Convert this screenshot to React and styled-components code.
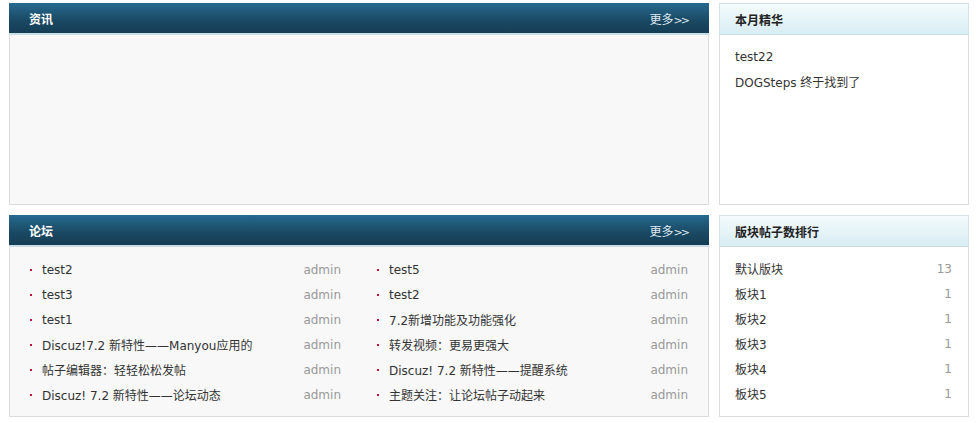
import styled, { createGlobalStyle } from 'styled-components';

const Global = createGlobalStyle`
  body {
    margin: 0;
    background: #fff;
    font-family: "DejaVu Sans", "Noto Sans CJK SC", sans-serif;
    font-size: 12px;
    color: #333;
  }
`;

const Page = styled.div`
  display: grid;
  grid-template-columns: 700px 250px;
  grid-template-rows: 202px 202px;
  column-gap: 10px;
  row-gap: 10px;
  padding: 3px 8px 0 9px;
`;

const Panel = styled.div`
  border: 1px solid #dcdcdc;
  background: ${p => (p.light ? '#fff' : '#f8f8f8')};
  display: flex;
  flex-direction: column;
  box-sizing: border-box;
`;

const Header = styled.div`
  margin: -1px -1px 0;
  display: flex;
  align-items: center;
  justify-content: space-between;
  padding: 0 20px 0 20px;
  box-sizing: border-box;
  ${p =>
    p.light
      ? `
    background: linear-gradient(#f4fbfd, #d8edf4);
    border: 1px solid #d4e2e8;
    border-bottom: 1px solid #c7dde6;
    color: #222;
    padding-left: 15px;
    height: 32px;
  `
      : `
    background: linear-gradient(#266a8f, #1a4862 60%, #153d55);
    border-bottom: 2px solid #c9dde8;
    color: #fff;
    height: 32px;
  `}
`;

const Title = styled.h3`
  margin: 0;
  font-size: 12px;
  font-weight: bold;
  font-family: "Noto Sans CJK SC", sans-serif;
`;

const More = styled.a`
  color: #dfeaf1;
  font-size: 12px;
  text-decoration: none;
  margin-right: -1px;
`;

const Arrows = styled.span`
  font-size: 11px;
  letter-spacing: -2px;
  padding-right: 2px;
`;

const TwoCols = styled.ul`
  list-style: none;
  margin: 0;
  padding: 10px 20px 0 18px;
  display: grid;
  grid-template-columns: 1fr 1fr;
  column-gap: 34px;
`;

const Item = styled.li`
  height: 25px;
  display: flex;
  align-items: center;
  justify-content: space-between;
  white-space: nowrap;
`;

const Link = styled.span`
  display: flex;
  align-items: center;
  color: #333;
  &::before {
    content: '';
    width: 2px;
    height: 2px;
    background: #c3103c;
    margin: 0 10px 0 2px;
  }
`;

const Author = styled.span`
  color: #999;
`;

const List = styled.ul`
  list-style: none;
  margin: 0;
  padding: 9px 16px 0 15px;
`;

const Count = styled.span`
  color: #999;
`;

const forum = [
  ['test2', 'test5'],
  ['test3', 'test2'],
  ['test1', '7.2新增功能及功能强化'],
  ['Discuz!7.2 新特性——Manyou应用的', '转发视频：更易更强大'],
  ['帖子编辑器：轻轻松松发帖', 'Discuz! 7.2 新特性——提醒系统'],
  ['Discuz! 7.2 新特性——论坛动态', '主题关注：让论坛帖子动起来'],
];

const boards = [
  ['默认版块', 13],
  ['板块1', 1],
  ['板块2', 1],
  ['板块3', 1],
  ['板块4', 1],
  ['板块5', 1],
];

export default function App() {
  const cells = [];
  forum.forEach(([a, b]) => {
    cells.push(a, b);
  });

  return (
    <>
      <Global />
      <Page>
        <Panel>
          <Header>
            <Title>资讯</Title>
            <More href="#">更多<Arrows>&gt;&gt;</Arrows></More>
          </Header>
        </Panel>

        <Panel light>
          <Header light>
            <Title>本月精华</Title>
          </Header>
          <List>
            <Item>test22</Item>
            <Item>DOGSteps 终于找到了</Item>
          </List>
        </Panel>

        <Panel>
          <Header>
            <Title>论坛</Title>
            <More href="#">更多<Arrows>&gt;&gt;</Arrows></More>
          </Header>
          <TwoCols>
            {cells.map((t, i) => (
              <Item key={i}>
                <Link>{t}</Link>
                <Author>admin</Author>
              </Item>
            ))}
          </TwoCols>
        </Panel>

        <Panel light>
          <Header light>
            <Title>版块帖子数排行</Title>
          </Header>
          <List>
            {boards.map(([name, n]) => (
              <Item key={name}>
                <span>{name}</span>
                <Count>{n}</Count>
              </Item>
            ))}
          </List>
        </Panel>
      </Page>
    </>
  );
}
